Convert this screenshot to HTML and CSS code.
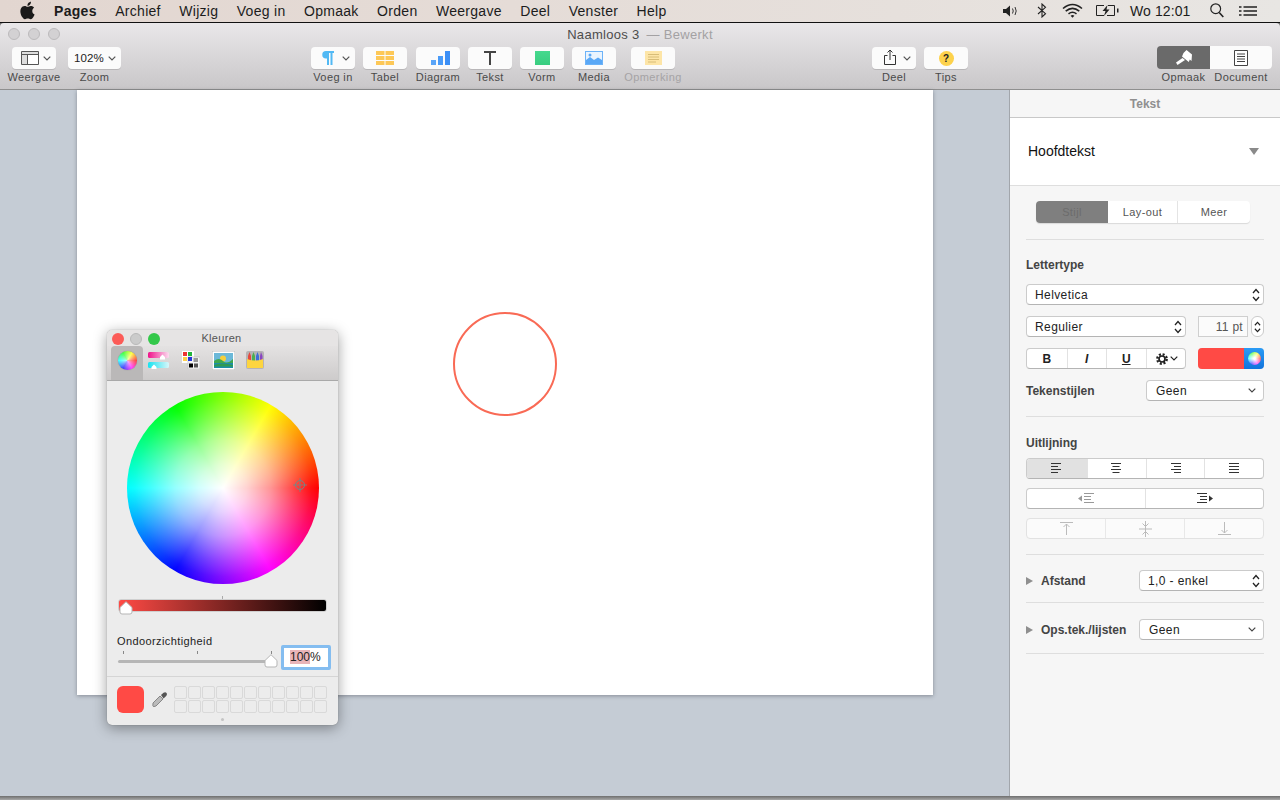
FILE: index.html
```html
<!DOCTYPE html>
<html lang="nl">
<head>
<meta charset="utf-8">
<title>Pages</title>
<link rel="stylesheet" href="styles.css">
</head>
<body>
<svg class="defs" width="0" height="0" aria-hidden="true">
  <symbol id="chev" viewBox="0 0 8 5"><path d="M.7.7 4 4 7.3.7" fill="none" stroke="currentColor" stroke-width="1.2"/></symbol>
  <symbol id="updown" viewBox="0 0 8 14"><path d="M1 5 4 1.6 7 5M1 9 4 12.4 7 9" fill="none" stroke="#222" stroke-width="1.3"/></symbol>
</svg>

<header class="menubar">
  <svg class="apple" viewBox="0 0 24 24"><path d="M18.71,19.5C17.88,20.74 17,21.95 15.66,21.97C14.32,22 13.89,21.18 12.37,21.18C10.84,21.18 10.37,21.95 9.1,22C7.79,22.05 6.8,20.68 5.96,19.47C4.25,17 2.94,12.45 4.7,9.39C5.57,7.87 7.13,6.91 8.82,6.88C10.1,6.86 11.32,7.75 12.11,7.75C12.89,7.75 14.37,6.68 15.92,6.84C16.57,6.87 18.39,7.1 19.56,8.82C19.47,8.88 17.39,10.1 17.41,12.63C17.44,15.65 20.06,16.66 20.09,16.67C20.06,16.74 19.67,18.11 18.71,19.5M13,3.5C13.73,2.67 14.94,2.04 15.94,2C16.07,3.17 15.6,4.35 14.9,5.19C14.21,6.04 13.07,6.7 11.95,6.61C11.8,5.46 12.36,4.26 13,3.5Z"/></svg>
  <nav class="menus">
    <span class="menu-app">Pages</span><span>Archief</span><span>Wijzig</span><span>Voeg in</span><span>Opmaak</span><span>Orden</span><span>Weergave</span><span>Deel</span><span>Venster</span><span>Help</span>
  </nav>
  <div class="status">
    <svg class="st-speaker" viewBox="0 0 16 12"><path d="M0 4h3l4-3.5v11L3 8H0z" fill="#222"/><path d="M9.5 3.5q1.5 2.5 0 5M12 2q2.4 4 0 8" fill="none" stroke="#333"/></svg>
    <svg class="st-bt" viewBox="0 0 10 15"><path d="M1 4 8.5 10.7 5 14V1l3.500 3.300L1 11" fill="none" stroke="#222" stroke-width="1.1"/></svg>
    <svg class="st-wifi" viewBox="0 0 21 15"><path d="M1 5.500Q10.500-2.500 20 5.500M3.700 8.200Q10.500 2.700 17.300 8.200M6.500 10.800Q10.500 7.800 14.500 10.800" fill="none" stroke="#222" stroke-width="1.6"/><path d="M8.600 12.800Q10.500 11.400 12.400 12.800L10.500 14.800z" fill="#222"/></svg>
    <svg class="st-bat" viewBox="0 0 23 11"><path d="M8 .5H.5v10H8M12 .5h6.500v10H11" fill="none" stroke="#222"/><path d="M21 3.500h1.500v4H21" fill="#222"/><path d="M11.500 0 6.500 6h3l-1.500 5 5.500-6.500h-3z" fill="#222"/></svg>
    <span class="st-clock">Wo 12:01</span>
    <svg class="st-search" viewBox="0 0 14 15"><circle cx="5.700" cy="5.700" r="4.900" fill="none" stroke="#222" stroke-width="1.200"/><path d="M9.200 9.500 13.300 14" stroke="#222" stroke-width="1.600"/></svg>
    <svg class="st-list" viewBox="0 0 18 10"><path d="M0 1h2.500M0 5h2.500M0 9h2.500M4.500 1H18M4.500 5H18M4.500 9H18" stroke="#222" stroke-width="1.500"/></svg>
  </div>
</header>

<div class="window">
  <div class="toolbar">
    <div class="titlerow">
      <div class="lights">
        <i class="light"></i><i class="light"></i><i class="light"></i>
      </div>
      <div class="doc-title">Naamloos 3<span class="doc-state">— Bewerkt</span></div>
    </div>
    <div class="tools">
      <div class="tool tool-view">
        <div class="tbtn">
          <svg class="ic-side" viewBox="0 0 18 14"><path d="M.5.500h17v13H.5z" fill="#fff" stroke="#555"/><path d="M1 1h16v3H1zM1 4h5v9H1z" fill="#ddd"/><path d="M.5 3.500h17M6.500 3.500v10" stroke="#555" fill="none"/></svg>
          <svg class="chev"><use href="#chev"/></svg>
        </div>
        <span class="tlabel">Weergave</span>
      </div>
      <div class="tool tool-zoom">
        <div class="tbtn"><span class="zoomval">102%</span><svg class="chev"><use href="#chev"/></svg></div>
        <span class="tlabel">Zoom</span>
      </div>

      <div class="tool tool-insert">
        <div class="tbtn">
          <svg class="ic-para" viewBox="0 0 13 14"><path d="M5 0h8v2h-1.500v12h-2V2H8v12H6V7.500H5A3.750 3.750 0 0 1 5 0z" fill="#52b9f4"/></svg>
          <svg class="chev"><use href="#chev"/></svg>
        </div>
        <span class="tlabel">Voeg in</span>
      </div>
      <div class="tool">
        <div class="tbtn tcenter">
          <svg class="ic-18" viewBox="0 0 18 14"><path d="M0 0h8.500v4H0zM9.500 0H18v4H9.500zM0 5h8.500v4H0zM9.500 5H18v4H9.500zM0 10h8.500v4H0zM9.500 10H18v4H9.500z" fill="#fdc857"/></svg>
        </div>
        <span class="tlabel">Tabel</span>
      </div>
      <div class="tool tool-diagram">
        <div class="tbtn tcenter">
          <svg class="ic-19" viewBox="0 0 19 14"><path d="M0 9h5v5H0z" fill="#5aa5f8"/><path d="M7 5h5v9H7z" fill="#4a9bf8"/><path d="M14 0h5v14h-5z" fill="#3c8ff6"/></svg>
        </div>
        <span class="tlabel">Diagram</span>
      </div>
      <div class="tool">
        <div class="tbtn tcenter">
          <svg class="ic-12" viewBox="0 0 12 14"><path d="M0 1h12M6 1v13" fill="none" stroke="#444" stroke-width="2"/></svg>
        </div>
        <span class="tlabel">Tekst</span>
      </div>
      <div class="tool">
        <div class="tbtn tcenter"><i class="ic-shape"></i></div>
        <span class="tlabel">Vorm</span>
      </div>
      <div class="tool">
        <div class="tbtn tcenter">
          <svg class="ic-18" viewBox="0 0 18 14"><path d="M0 0h18v14H0z" fill="#6db3f8"/><path d="M1 1h16v12H1z" fill="#eaf4fe"/><path d="M1 13V9l4-3 4 3 4-2.500 4 2.500v4z" fill="#5aa8f6"/><circle cx="5" cy="4" r="1.500" fill="#5aa8f6"/></svg>
        </div>
        <span class="tlabel">Media</span>
      </div>
      <div class="tool tool-note">
        <div class="tbtn tcenter">
          <svg class="ic-17" viewBox="0 0 17 14"><path d="M0 0h17v14H0z" fill="#fde5a7"/><path d="M3 3.500h11M3 6h11M3 8.500h11M3 11h8" stroke="#d8bd78"/></svg>
        </div>
        <span class="tlabel tlabel-off">Opmerking</span>
      </div>

      <div class="tool tool-share">
        <div class="tbtn">
          <svg class="ic-share" viewBox="0 0 12 16"><path d="M3.500 6.500H.5v9h11v-9h-3" fill="none" stroke="#333"/><path d="M6 11V1M3.500 3.500 6 1l2.500 2.500" fill="none" stroke="#333"/></svg>
          <svg class="chev"><use href="#chev"/></svg>
        </div>
        <span class="tlabel">Deel</span>
      </div>
      <div class="tool">
        <div class="tbtn tcenter"><span class="ic-tips">?</span></div>
        <span class="tlabel">Tips</span>
      </div>

      <div class="modeswitch">
        <div class="mode mode-on">
          <svg class="ic-brush" viewBox="0 0 18 16"><path d="M8.500 3 11.500 0 17 4.500 16.500 11 14.800 9.500 13.800 12 7 6.500z" fill="#fff"/><path d="M7.500 8 1 12.500 2.500 15 10 10z" fill="#fff"/></svg>
        </div>
        <div class="mode">
          <svg class="ic-doc" viewBox="0 0 14 16"><path d="M.5.500h13v15H.5z" fill="#fff" stroke="#444"/><path d="M3 4h8M3 6.500h8M3 9h8M3 11.500h8" stroke="#444"/></svg>
        </div>
        <span class="tlabel">Opmaak</span>
        <span class="tlabel">Document</span>
      </div>
    </div>
  </div>

  <div class="main">
    <div class="canvas">
      <div class="page">
        <i class="circle"></i>
      </div>

      <section class="colors">
        <div class="c-title">
          <i class="c-light c-red"></i><i class="c-light c-grey"></i><i class="c-light c-green"></i>
          <span class="c-name">Kleuren</span>
        </div>
        <div class="c-tabs">
          <div class="c-tab c-tab-on"><i class="mini-wheel"></i></div>
          <div class="c-tab">
            <svg class="ic-sliders" viewBox="0 0 22 18"><defs><linearGradient id="gp"><stop offset="0" stop-color="#f0128a"/><stop offset="1" stop-color="#fbdcef"/></linearGradient><linearGradient id="gc"><stop offset="0" stop-color="#17e3f0"/><stop offset="1" stop-color="#d8f6fa"/></linearGradient></defs><rect y="1" width="21" height="6" rx="1.500" fill="url(#gp)"/><rect y="11" width="21" height="6" rx="1.500" fill="url(#gc)"/><path d="M14.500 3.500 17 6v2.500h-5V6zM6 13.500 8.500 16v2h-5v-2z" fill="#fff"/></svg>
          </div>
          <div class="c-tab">
            <svg class="ic-pal" viewBox="0 0 18 18"><path d="M0 0h12v12H0z" fill="#fff"/><path d="M6 6h12v12H6z" fill="#f4f4f4" stroke="#bbb" stroke-width=".6"/><path d="M1 1h4v4H1z" fill="#ee3333"/><path d="M6 1h4v4H6z" fill="#22b43c"/><path d="M1 6h4v4H1z" fill="#fdcf4a"/><path d="M6 6h4v4H6z" fill="#2438d8"/><path d="M11.500 7h4.500v4h-4.500z" fill="#999"/><path d="M7 12.500h4v4H7z" fill="#000"/><path d="M12 12.500h4v4h-4z" fill="#555"/></svg>
          </div>
          <div class="c-tab">
            <svg class="ic-img" viewBox="0 0 23 19"><path d="M0 0h23v19H0z" fill="#fff" stroke="#bbb"/><path d="M2 2h19v15H2z" fill="#6bb8d8"/><circle cx="11" cy="7.500" r="3" fill="#f5cf3c"/><path d="M2 10q5-4 9 0t10-2v4H2z" fill="#3fa84e"/><path d="M2 12h19v5H2z" fill="#1c8ea8"/><path d="M2 14q8-3 19 0v1.500H2z" fill="#2f9a52"/></svg>
          </div>
          <div class="c-tab">
            <svg class="ic-cray" viewBox="0 0 18 18"><rect width="18" height="18" rx="2" fill="#b5b3b5"/><path d="M2 5 3.500 1 5 5v5H2z" fill="#e6483e"/><path d="M6 5 7.500 1 9 5v5H6z" fill="#4caf50"/><path d="M10 5l1.500-4L13 5v5h-3z" fill="#3b6fd8"/><path d="M14 5l1-4 1.500 4v5H14z" fill="#8a46c0"/><path d="M1 8q8 3 16 0v9H1z" fill="#fdd53f"/></svg>
          </div>
        </div>
        <div class="c-body">
          <div class="wheel">
            <svg class="cross" viewBox="0 0 14 14"><circle cx="7" cy="7" r="4.500" fill="none" stroke="#6d8c8c"/><path d="M7 0v14M0 7h14" stroke="#6d8c8c" stroke-width=".8"/></svg>
          </div>
          <div class="bright">
            <i class="bright-tick"></i>
            <svg class="thumb thumb-b" viewBox="0 0 14 14"><path d="M7 .7 13 6.500v4.500a2 2 0 0 1-2 2H3a2 2 0 0 1-2-2V6.500z" fill="#fff" stroke="#b5b5b5"/></svg>
          </div>
          <div class="opacity-label">Ondoorzichtigheid</div>
          <div class="opacity">
            <div class="op-track">
              <i class="op-tick op-t1"></i><i class="op-tick op-t2"></i><i class="op-tick op-t3"></i>
              <svg class="thumb thumb-o" viewBox="0 0 14 14"><path d="M7 .7 13 6.500v4.500a2 2 0 0 1-2 2H3a2 2 0 0 1-2-2V6.500z" fill="#fff" stroke="#b5b5b5"/></svg>
            </div>
            <div class="op-input"><span class="op-sel">100</span>%</div>
          </div>
        </div>
        <div class="c-foot">
          <i class="swatch"></i>
          <svg class="ic-drop" viewBox="0 0 15 15"><path d="M9 3 11.500.8q2-1 3 .2t-.3 3L11.500 6.500z" fill="#555"/><path d="M8 4 11 7 4 14l-2.500.7L.8 13.500 1 11z" fill="#bbb" stroke="#666" stroke-width=".7"/></svg>
          <div class="wells">
            <i></i><i></i><i></i><i></i><i></i><i></i><i></i><i></i><i></i><i></i><i></i>
            <i></i><i></i><i></i><i></i><i></i><i></i><i></i><i></i><i></i><i></i><i></i>
          </div>
        </div>
        <i class="c-grip"></i>
      </section>
    </div>

    <aside class="inspector">
      <div class="i-head">Tekst</div>
      <div class="i-style">
        <span class="i-style-name">Hoofdtekst</span>
        <i class="tri-down"></i>
      </div>
      <div class="i-tabs">
        <div class="tabs">
          <span class="tab tab-on">Stijl</span><span class="tab tab-2">Lay-out</span><span class="tab">Meer</span>
        </div>
      </div>

      <div class="sec sec-font">
        <h3 class="sec-label">Lettertype</h3>
        <div class="rows">
          <div class="sel">Helvetica<svg class="updown"><use href="#updown"/></svg></div>
          <div class="row">
            <div class="sel sel-160">Regulier<svg class="updown"><use href="#updown"/></svg></div>
            <div class="size">11 pt</div>
            <div class="stepper"><svg class="updown"><use href="#updown"/></svg></div>
          </div>
          <div class="row">
            <div class="seg seg-biu">
              <span class="b">B</span><span class="i">I</span><span class="u">U</span>
              <span class="gear">
                <svg class="ic-gear" viewBox="0 0 12 12"><circle cx="6" cy="6" r="4.700" fill="none" stroke="#222" stroke-width="2.400" stroke-dasharray="2 1.700"/><circle cx="6" cy="6" r="3" fill="none" stroke="#222" stroke-width="1.700"/></svg><svg class="chev chev-gear"><use href="#chev"/></svg>
              </span>
            </div>
            <div class="well"><i class="well-red"></i><span class="well-blue"><i class="well-wheel"></i></span></div>
          </div>
          <div class="row row-between">
            <span class="field-label">Tekenstijlen</span>
            <div class="sel sel-118">Geen<svg class="chev chev-sel"><use href="#chev"/></svg></div>
          </div>
        </div>
      </div>

      <div class="sec sec-align">
        <h3 class="sec-label">Uitlijning</h3>
        <div class="rows rows-9">
          <div class="seg seg-4">
            <span class="seg-on"><svg class="ic-al" viewBox="0 0 10 11"><path d="M0 .5h10M0 3.500h7M0 6.500h10M0 9.500h7" stroke="#333"/></svg></span>
            <span><svg class="ic-al" viewBox="0 0 10 11"><path d="M0 .5h10M1.500 3.500h7M0 6.500h10M1.500 9.500h7" stroke="#333"/></svg></span>
            <span><svg class="ic-al" viewBox="0 0 10 11"><path d="M0 .5h10M3 3.500h7M0 6.500h10M3 9.500h7" stroke="#333"/></svg></span>
            <span><svg class="ic-al" viewBox="0 0 10 11"><path d="M0 .5h10M0 3.500h10M0 6.500h10M0 9.500h10" stroke="#333"/></svg></span>
          </div>
          <div class="seg seg-2">
            <span><svg class="ic-ind" viewBox="0 0 16 11"><path d="M0 5.500 4 2.500v6z" fill="#999"/><path d="M6 .5h10M6 3.500h7M6 6.500h7M6 9.500h10" stroke="#999"/></svg></span>
            <span><svg class="ic-ind" viewBox="0 0 16 11"><path d="M16 5.500 12 2.500v6z" fill="#333"/><path d="M0 .5h10M3 3.500h7M3 6.500h7M0 9.500h10" stroke="#333"/></svg></span>
          </div>
          <div class="seg seg-3 seg-off">
            <span><svg class="ic-v" viewBox="0 0 13 13"><path d="M0 .5h13M6.500 13V2M3.500 5l3-3 3 3" fill="none" stroke="#bbb"/></svg></span>
            <span><svg class="ic-v2" viewBox="0 0 13 16"><path d="M0 8h13M6.500 0v16M3.500 2.500l3 3 3-3M3.500 13.500l3-3 3 3" fill="none" stroke="#bbb"/></svg></span>
            <span><svg class="ic-v" viewBox="0 0 13 13"><path d="M0 12.500h13M6.500 0v11M3.500 8l3 3 3-3" fill="none" stroke="#bbb"/></svg></span>
          </div>
        </div>
      </div>

      <div class="sec sec-space">
        <div class="row row-disc">
          <i class="tri-right"></i><span class="field-label">Afstand</span>
          <div class="sel sel-125">1,0 - enkel<svg class="updown"><use href="#updown"/></svg></div>
        </div>
      </div>
      <div class="sec sec-list">
        <div class="row row-disc">
          <i class="tri-right"></i><span class="field-label">Ops.tek./lijsten</span>
          <div class="sel sel-125 sel-pad9">Geen<svg class="chev chev-sel"><use href="#chev"/></svg></div>
        </div>
      </div>
    </aside>
  </div>
</div>
</body>
</html>
```

FILE: styles.css
```css
* { box-sizing: border-box; }
html, body { margin: 0; height: 800px; overflow: hidden; }
body {
  font-family: "Liberation Sans", Arial, sans-serif;
  background: linear-gradient(#6e6e6e 796px, #a8a8a8 800px);
  color: #222;
}
i { display: block; }
svg { display: block; flex: none; }
.defs { position: absolute; }

/* menu bar */
.menubar {
  height: 23px;
  display: flex;
  align-items: center;
  padding: 0 23px 1px 17px;
  background: linear-gradient(90deg, #e2d6d0 0%, #e5dcd7 40%, #e6e0dc 70%, #e8e6e3 100%);
  border-bottom: 1px solid #111;
  font-size: 14px;
  color: #1c1c1c;
}
.apple { width: 21px; height: 21px; margin-top: -1px; fill: #1a1a1a; }
.menus { display: flex; gap: 18.400px; margin-left: 16px; letter-spacing: .3px; }
.menu-app { font-weight: 700; }
.status { margin-left: auto; display: flex; align-items: center; }
.st-speaker { width: 16px; height: 12px; }
.st-bt { width: 10px; height: 15px; margin-left: 18px; }
.st-wifi { width: 21px; height: 15px; margin-left: 15px; }
.st-bat { width: 23px; height: 11px; margin-left: 13px; }
.st-clock { margin-left: 11px; width: 61px; white-space: nowrap; letter-spacing: .1px; }
.st-search { width: 14px; height: 15px; margin-left: 19px; }
.st-list { width: 18px; height: 10px; margin-left: 15px; }

/* window */
.window {
  height: 773px;
  display: flex;
  flex-direction: column;
  border-radius: 4px 4px 0 0;
  overflow: hidden;
}
.toolbar {
  height: 67px;
  background: linear-gradient(#e9e7e9, #c9c7c9);
  border-bottom: 1px solid #8f8f8f;
  flex: none;
}
.titlerow { height: 23px; position: relative; display: flex; justify-content: center; align-items: center; }
.lights { position: absolute; left: 8px; top: 5px; display: flex; gap: 8px; }
.light { width: 12px; height: 12px; border-radius: 50%; background: #d3d1d3; border: 1px solid #bcbabc; }
.doc-title { font-size: 13px; color: #4c4c4c; white-space: nowrap; letter-spacing: .3px; }
.doc-state { color: #a3a1a3; margin-left: 7px; }

.tools { display: flex; padding: 1px 0 0 12px; align-items: flex-start; }
.tool { display: flex; flex-direction: column; align-items: center; width: 44px; margin-right: 8px; }
.tool-view { margin-right: 12px; }
.tool-zoom { width: 53px; margin-right: 190px; }
.tool-diagram { margin-left: 1px; }
.tool-note { margin-left: 7px; margin-right: 197px; }
.tbtn {
  width: 100%;
  height: 22px;
  background: #fbfbfb;
  border-radius: 4px;
  box-shadow: 0 1px 0 rgba(0, 0, 0, .12);
  display: flex;
  align-items: center;
  padding-left: 9px;
  color: #555;
}
.tcenter { padding: 0; justify-content: center; }
.tlabel { font-size: 11px; line-height: 14px; margin-top: 1px; color: #4a4a4a; white-space: nowrap; text-align: center; letter-spacing: .4px; }
.tlabel-off { color: #a5a3a5; }
.chev { width: 8px; height: 5px; color: #555; margin-left: auto; margin-right: 5px; }
.zoomval { font-size: 11.500px; color: #222; margin-left: -3px; letter-spacing: .1px; }
.ic-side { width: 18px; height: 14px; }
.ic-para { width: 13px; height: 14px; margin-left: 1px; }
.ic-18 { width: 18px; height: 14px; }
.ic-19 { width: 19px; height: 14px; margin-left: 4px; }
.ic-12 { width: 12px; height: 14px; }
.ic-17 { width: 17px; height: 14px; }
.ic-shape { width: 15px; height: 14px; background: linear-gradient(#46d98e, #39cd80); }
.ic-share { width: 12px; height: 16px; margin-left: 3px; margin-top: -2px; }
.ic-tips {
  width: 15px; height: 15px; border-radius: 50%;
  background: #fdd24c;
  font-size: 10px; font-weight: 700; color: #222;
  display: flex; align-items: center; justify-content: center;
}
.modeswitch {
  margin-left: 181px;
  margin-top: -1px;
  display: grid;
  grid-template-columns: 53px 62px;
  grid-template-rows: 23px 14px;
  row-gap: 1px;
  justify-items: center;
}
.mode { width: 100%; height: 23px; background: #fbfbfb; display: flex; align-items: center; justify-content: center; border-radius: 0 4px 4px 0; }
.mode-on { background: #6a6a6a; border-radius: 4px 0 0 4px; }
.modeswitch .tlabel { margin: 0; }
.ic-brush { width: 18px; height: 16px; }
.ic-doc { width: 14px; height: 16px; }

/* main */
.main { flex: 1; display: flex; min-height: 0; }
.canvas {
  width: 1010px;
  background: #c5ccd5;
  border-right: 1px solid #a2a6ac;
  position: relative;
  padding-left: 77px;
}
.page {
  width: 856px;
  height: 605px;
  background: #fff;
  box-shadow: 0 1px 4px rgba(60, 65, 75, .45);
  position: relative;
}
.circle {
  position: absolute;
  left: 376px;
  top: 222px;
  width: 104px;
  height: 104px;
  border: 2px solid #f96a55;
  border-radius: 50%;
}

/* colour panel */
.colors {
  position: absolute;
  left: 107px;
  top: 240px;
  width: 231px;
  height: 395px;
  background: #ececec;
  border-radius: 5px;
  box-shadow: 0 3px 14px rgba(0, 0, 0, .38), 0 0 1px rgba(0, 0, 0, .4);
  overflow: hidden;
}
.c-title { height: 16px; padding: 3px 0 0 5px; display: flex; gap: 6px; background: #e6e4e4; position: relative; }
.c-light { width: 12px; height: 12px; border-radius: 50%; }
.c-red { background: #fc5b57; }
.c-grey { background: #cbcbcb; border: 1px solid #b8b8b8; }
.c-green { background: #34c84a; }
.c-name { position: absolute; left: 0; right: 2px; top: 2px; text-align: center; font-size: 11px; color: #555; line-height: 13px; letter-spacing: .3px; }
.c-tabs { height: 35px; padding-left: 4px; display: flex; background: linear-gradient(#e4e2e2, #cdcbcb); border-bottom: 1px solid #a9a9a9; }
.c-tab { width: 32px; height: 34px; display: flex; align-items: center; justify-content: center; padding-bottom: 6px; }
.c-tab-on { background: #bab8b8; border-radius: 4px 4px 0 0; padding-bottom: 6px; }
.mini-wheel {
  width: 19px; height: 19px; border-radius: 50%;
  background: radial-gradient(circle, rgba(255,255,255,.7), rgba(255,255,255,.1) 90%),
    conic-gradient(from 90deg, #f00, #f0f, #00f, #0ff, #0f0, #ff0, #f00);
  box-shadow: 0 0 1px #777;
}
.ic-sliders { width: 22px; height: 18px; }
.ic-pal { width: 18px; height: 18px; }
.ic-img { width: 23px; height: 19px; }
.ic-cray { width: 18px; height: 18px; }

.c-body { height: 296px; padding: 10.500px 0 0 0; border-bottom: 1px solid #d5d5d5; }
.wheel {
  width: 192px; height: 192px;
  margin-left: 19.500px;
  border-radius: 50%;
  position: relative;
  background:
    radial-gradient(circle closest-side, #fff 0%, rgba(255,255,255,.82) 25%, rgba(255,255,255,.58) 50%, rgba(255,255,255,.26) 75%, rgba(255,255,255,.06) 92%, rgba(255,255,255,0) 100%),
    conic-gradient(from 90deg, #f00, #f0f, #00f, #0ff, #0f0, #ff0, #f00);
}
.cross { position: absolute; left: 166px; top: 86px; width: 14px; height: 14px; }
.bright {
  margin: 15px 0 0 11px;
  width: 209px; height: 13px;
  border: 1px solid #cfcfcf;
  border-radius: 3px;
  background: linear-gradient(90deg, #ff4a45, #000);
  position: relative;
}
.bright-tick { position: absolute; left: 103px; top: -4px; width: 1px; height: 3px; background: #aaa; }
.thumb { position: absolute; width: 14px; height: 14px; }
.thumb-b { left: 0; top: 1px; }
.opacity-label { margin: 23px 0 0 10px; font-size: 11px; line-height: 13px; color: #222; letter-spacing: .4px; }
.opacity { display: flex; align-items: flex-start; margin: 0 0 0 11px; }
.op-track { width: 154px; height: 3px; margin-top: 12.500px; background: #b6b6b6; border-radius: 2px; position: relative; }
.op-tick { position: absolute; top: -9px; width: 1px; height: 3px; background: #888; }
.op-t1 { left: 5px; } .op-t2 { left: 79px; } .op-t3 { left: 153px; }
.thumb-o { left: 146px; top: -6px; }
.op-input {
  margin: -2.500px 0 0 9px;
  width: 50px; height: 25px;
  background: #fff;
  border: 3px solid #84bdf0;
  border-radius: 2px;
  font-size: 12px;
  line-height: 19px;
  padding-left: 6px;
  color: #222;
  white-space: nowrap;
}
.op-sel { background: #e9b4b8; }
.c-foot { padding: 9px 0 0 10px; display: flex; align-items: flex-start; }
.swatch { width: 27px; height: 27px; border-radius: 6px; background: #ff4a45; }
.ic-drop { width: 15px; height: 15px; margin: 6px 0 0 8px; }
.wells { margin-left: 7px; display: grid; grid-template-columns: repeat(11, 13px); grid-auto-rows: 13px; gap: 1px; }
.wells i { border: 1px solid #d9d9d9; border-radius: 2px; }
.c-grip { width: 3px; height: 3px; border-radius: 50%; background: #c4c4c4; margin: 5px 0 0 114px; }

/* inspector */
.inspector { width: 270px; background: #f6f6f6; color: #222; font-size: 12px; }
.i-head { height: 28px; border-bottom: 1px solid #c8c8c8; text-align: center; font-weight: 700; color: #8f8f8f; line-height: 28px; }
.i-style { height: 68px; background: #fff; border-bottom: 1px solid #dedede; display: flex; align-items: center; justify-content: space-between; padding: 0 21px 0 18px; font-size: 14px; color: #111; }
.i-style-name { margin-bottom: 2px; }
.tri-down { width: 0; height: 0; border-left: 5.500px solid transparent; border-right: 5.500px solid transparent; border-top: 7px solid #8a8a8a; }
.i-tabs { padding: 15px 16px 0; }
.tabs { margin: 0 14px 0 10px; display: flex; height: 22px; background: #fff; border-radius: 4px; box-shadow: 0 1px 1px rgba(0,0,0,.12); font-size: 11px; color: #555; overflow: hidden; letter-spacing: .4px; }
.tab { width: 72px; display: flex; align-items: center; justify-content: center; }
.tab-on { background: #7f7f7f; color: #6c6c6c; }
.tab-2 { width: 70px; border-right: 1px solid #e4e4e4; }
.sec { margin: 0 16px; border-top: 1px solid #dedede; }
.sec-font { margin-top: 16px; padding: 18px 0 15px; }
.sec-align { padding: 19px 0 15px; }
.sec-space { padding: 15px 0 11px; }
.sec-list { padding: 16px 0 13px; border-bottom: 1px solid #dedede; }
.sec-label { margin: 0 0 12px; font-size: 12px; line-height: 14px; font-weight: 700; color: #444; }
.sec-align .sec-label { margin-bottom: 8px; }
.rows { display: flex; flex-direction: column; gap: 11px; }
.rows-9 { gap: 9px; }
.row { display: flex; align-items: flex-start; height: 21px; }
.row-between { justify-content: space-between; align-items: center; }
.row-disc { align-items: center; }
.field-label { font-weight: 700; color: #444; white-space: nowrap; }
.sel {
  height: 21px;
  background: #fff;
  border: 1px solid #cbcbcb;
  border-bottom-color: #b4b4b4;
  border-radius: 4px;
  display: flex;
  align-items: center;
  justify-content: space-between;
  padding: 0 3px 0 8px;
  color: #222;
  letter-spacing: .4px;
}
.updown { width: 8px; height: 14px; }
.sel-160 { width: 160px; }
.sel-118 { width: 118px; padding-left: 9px; }
.sel-125 { width: 125px; margin-left: auto; }
.sel-pad9 { padding-left: 9px; }
.chev-sel { margin: 0 4px 0 auto; width: 8px; height: 5px; color: #444; }
.size { width: 50px; height: 21px; margin: 0 0 0 12px; background: #fbfbfb; border: 1px solid #cfcfcf; font-size: 12px; color: #555; display: flex; align-items: center; justify-content: flex-end; padding-right: 4px; letter-spacing: .3px; }
.stepper { width: 13px; height: 21px; margin-left: 3px; background: #fff; border: 1px solid #cbcbcb; border-radius: 6px; display: flex; align-items: center; justify-content: center; }
.stepper .updown { width: 7px; height: 14px; }
.seg {
  display: grid;
  height: 21px;
  background: #fff;
  border: 1px solid #cbcbcb;
  border-bottom-color: #b4b4b4;
  border-radius: 4px;
  overflow: hidden;
}
.seg > span { display: flex; align-items: center; justify-content: center; border-left: 1px solid #e2e2e2; }
.seg > span:first-child { border-left: 0; }
.seg-biu { width: 160px; grid-template-columns: repeat(4, 1fr); font-size: 12px; font-weight: 700; color: #222; }
.i { font-style: italic; }
.u { text-decoration: underline; }
.seg > .gear { padding-left: 3px; }
.ic-gear { width: 12px; height: 12px; }
.chev-gear { margin: 0 0 0 2px; color: #222; }
.well { width: 66px; height: 21px; margin-left: 12px; display: flex; border-radius: 4px; overflow: hidden; box-shadow: inset 0 0 0 1px rgba(0,0,0,.08); }
.well-red { width: 46px; background: #ff4a45; }
.well-blue { width: 20px; background: linear-gradient(#2a9bf5, #1273dc); display: flex; align-items: center; justify-content: center; }
.well-wheel { width: 13px; height: 13px; border-radius: 50%; background: radial-gradient(circle, #fff 10%, rgba(255,255,255,.2) 90%), conic-gradient(from 90deg, #f00, #f0f, #00f, #0ff, #0f0, #ff0, #f00); }
.seg-4 { grid-template-columns: 60px 59px 58px 1fr; }
.seg-4 > span:nth-child(-n+2) .ic-al { margin-left: -2px; }
.seg-on { background: #e1e1e1; }
.seg-2 { grid-template-columns: 118px 1fr; }
.seg-3 { grid-template-columns: 78px 79px 1fr; }
.seg-off { background: #fbfbfb; border-color: #e2e2e2; }
.seg-off > span { border-left-color: #e8e8e8; }
.ic-al { width: 10px; height: 11px; }
.ic-ind { width: 16px; height: 11px; }
.ic-v { width: 13px; height: 13px; }
.ic-v2 { width: 13px; height: 16px; }
.tri-right { width: 0; height: 0; border-top: 4px solid transparent; border-bottom: 4px solid transparent; border-left: 7px solid #8f8f8f; margin-right: 8px; }
```
